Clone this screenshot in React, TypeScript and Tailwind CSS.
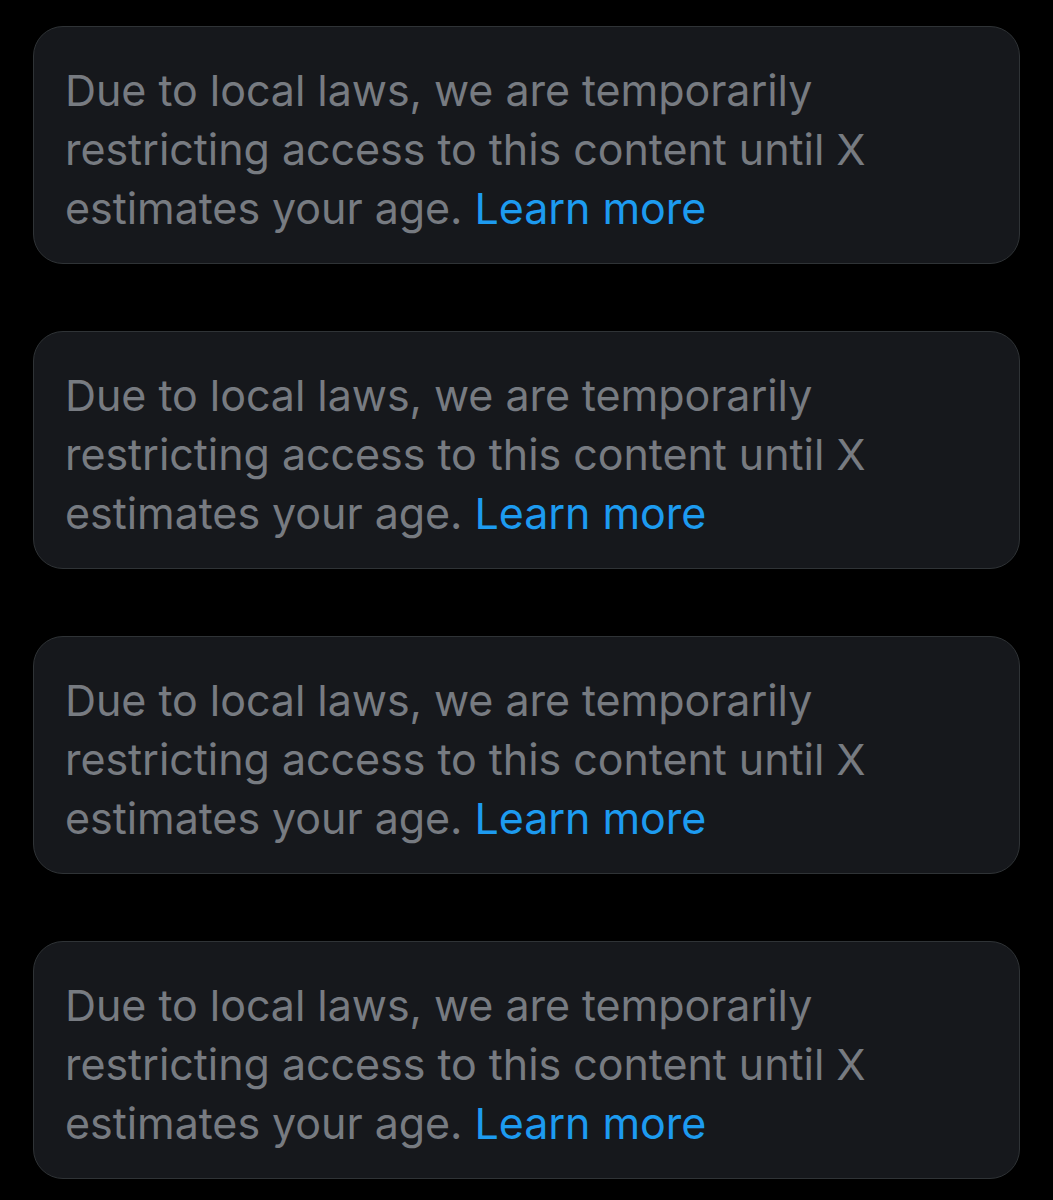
import React from 'react';

const Notice: React.FC = () => (
  <div className="rounded-[30px] border border-[#2f3336] bg-[#16181c] px-[31px] pt-[34px] h-[238px]">
    <p className="text-[43px] leading-[59px] text-[#777b81] tracking-[-0.05px]">
      Due to local laws, we are temporarily restricting access to this content until X estimates your age.{' '}
      <span className="text-[#1d9bf0]">Learn more</span>
    </p>
  </div>
);

export default function App() {
  return (
    <div
      className="min-h-[1200px] bg-black px-[33px] pt-[26px] flex flex-col gap-[67px]"
      style={{ fontFamily: 'Inter, "Noto Sans", sans-serif' }}
    >
      {[0, 1, 2, 3].map((i) => (
        <Notice key={i} />
      ))}
    </div>
  );
}
